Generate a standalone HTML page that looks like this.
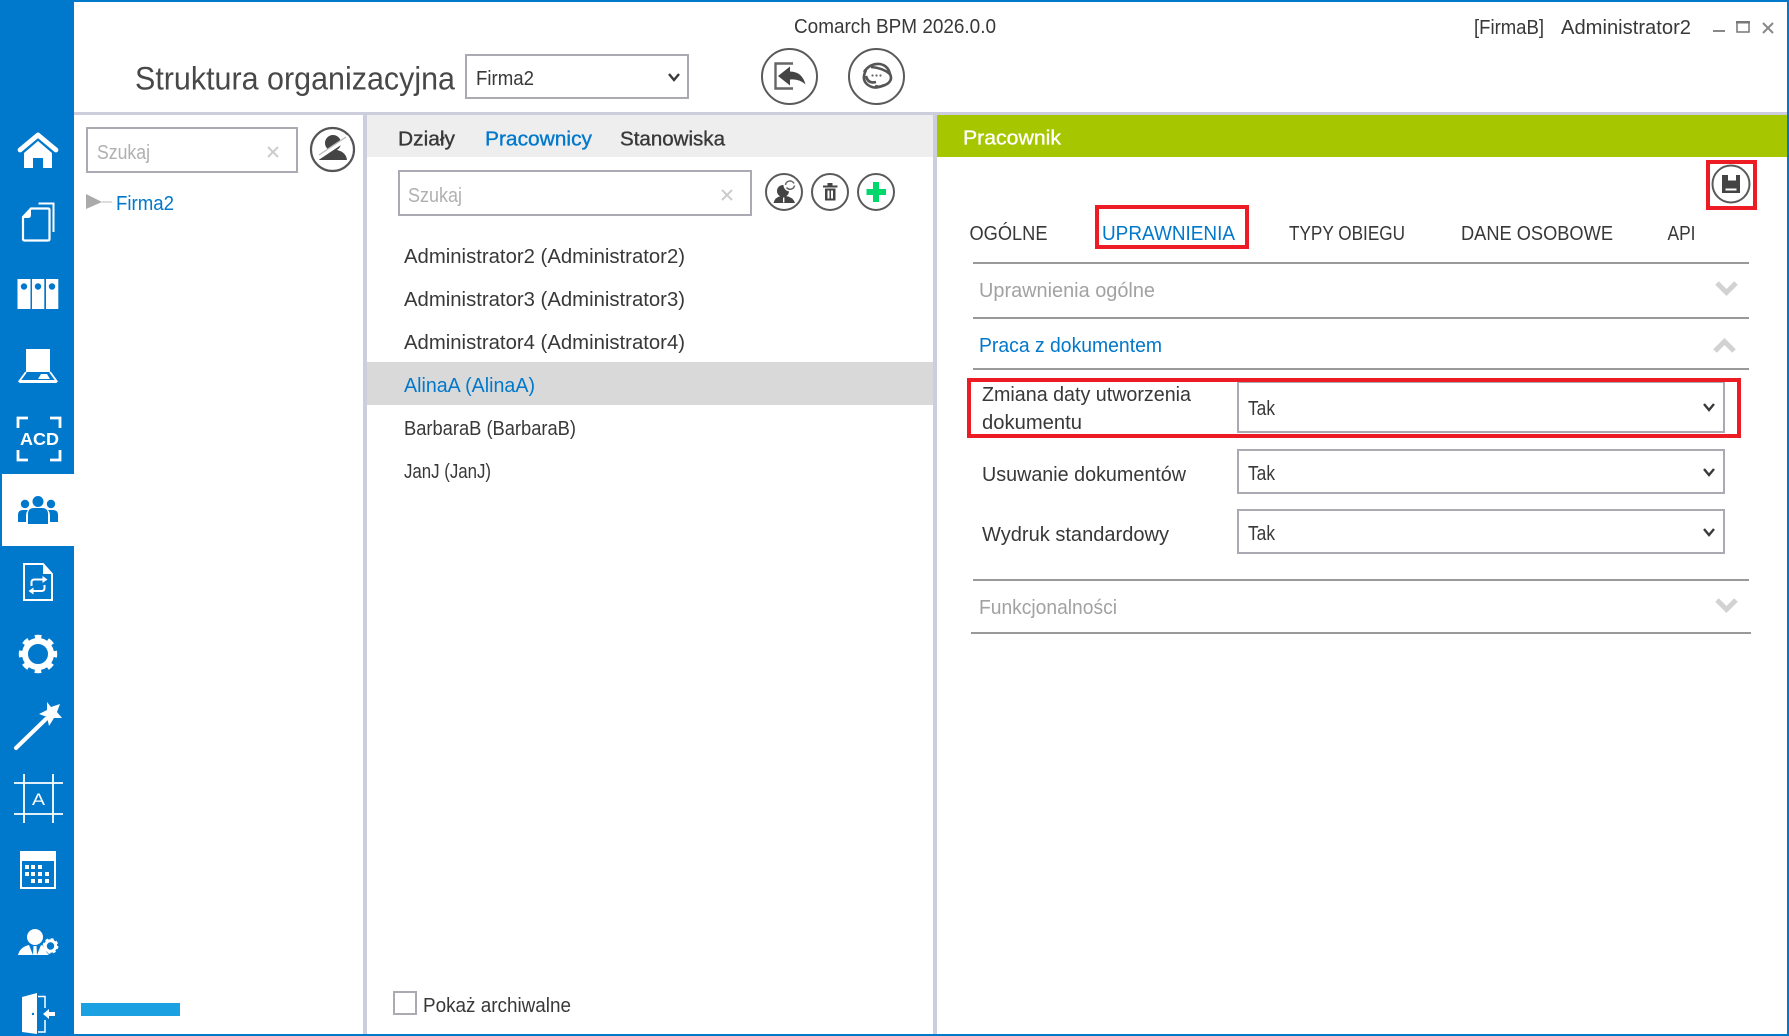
<!DOCTYPE html>
<html lang="pl">
<head>
<meta charset="utf-8">
<title>Comarch BPM</title>
<style>
html,body{margin:0;padding:0;background:#fff;width:1789px;height:1036px;overflow:hidden}
svg{display:block}
text{font-family:"Liberation Sans",Arial,sans-serif;font-size:20px;fill:#383838;white-space:pre}
.g{fill:#b0b0b0}
.a{fill:#a2a2a2}
.b{fill:#0078cc}
.s{stroke-width:.35px}
.ln{fill:#999}
.sel{fill:#fff;stroke:#aaaab2;stroke-width:2}
.chev{fill:none;stroke:#3a3a3a;stroke-width:2.4}
.acc{fill:none;stroke:#d2d2d2;stroke-width:5}
.cir{fill:#fff;stroke:#5a5a5a;stroke-width:2}
.red{fill:none;stroke:#ed1c24;stroke-width:4}
.xx{fill:none;stroke:#ccc;stroke-width:2}
</style>
</head>
<body>
<svg xmlns="http://www.w3.org/2000/svg" width="1789" height="1036" viewBox="0 0 1789 1036">
<!-- frame -->
<rect width="1789" height="1036" fill="#fff"/>
<rect x="0" y="0" width="74" height="1036" fill="#0078cc"/>
<rect x="2" y="474" width="72" height="72" fill="#fff"/>
<rect x="0" y="0" width="1789" height="2" fill="#0078cc"/>
<rect x="0" y="1034" width="1789" height="2" fill="#0078cc"/>
<rect x="1787" y="0" width="2" height="1036" fill="#0078cc"/>

<!-- panels -->
<rect x="367" y="115" width="566" height="42" fill="#eee"/>
<rect x="937" y="115" width="850" height="42" fill="#a6c600"/>
<rect x="367" y="362" width="566" height="43" fill="#d9d9d9"/>
<rect x="74" y="112" width="1713" height="3" fill="#ccceDE"/>
<rect x="363" y="112" width="4" height="922" fill="#ccceDE"/>
<rect x="933" y="112" width="4" height="922" fill="#ccceDE"/>

<!-- sidebar icons -->
<g fill="#fff">
  <!-- home -->
  <path d="M20 150 38 135 56 150" fill="none" stroke="#fff" stroke-width="4.800" stroke-linecap="round" stroke-linejoin="round"/>
  <path d="M24 153 38 141 52 153V168H43V158H33V168H24Z"/>
  <!-- documents -->
  <path d="M38.500 203.500H53.500V232" fill="none" stroke="#fff" stroke-width="2"/>
  <path d="M31 208.500H48Q49.500 208.500 49.500 210V239Q49.500 240.500 48 240.500H24.500Q23 240.500 23 239V217Z" fill="none" stroke="#fff" stroke-width="2.200"/>
  <path d="M23 218 31 208.500V215Q31 218 28 218Z"/>
  <!-- binders -->
  <rect x="17.500" y="279" width="13" height="30"/>
  <rect x="32" y="279" width="12.300" height="30"/>
  <rect x="46" y="279" width="12.300" height="30"/>
  <circle cx="24" cy="286.500" r="3.200" fill="#0078cc"/>
  <circle cx="38" cy="286.500" r="3.200" fill="#0078cc"/>
  <circle cx="52" cy="286.500" r="3.200" fill="#0078cc"/>
  <!-- laptop -->
  <rect x="26" y="349" width="24" height="23"/>
  <path d="M26 372 19.500 381H56.500L50 372" fill="none" stroke="#fff" stroke-width="1.800"/>
  <path d="M38 379 41 374H47L50 379Z"/>
  <rect x="19" y="380" width="38" height="3" rx="1"/>
  <!-- ACD -->
  <path d="M18 428V418H28M50 418H60V428M18 450V460H28M50 460H60V450" fill="none" stroke="#fff" stroke-width="2.800"/>
  <text x="20" y="445" textLength="39" lengthAdjust="spacingAndGlyphs" style="font-size:17.500px;font-weight:bold;fill:#fff">ACD</text>
</g>
<!-- people -->
<g fill="#0078cc">
  <circle cx="38" cy="501.500" r="5.500"/>
  <circle cx="25" cy="504" r="4.200"/>
  <circle cx="51" cy="504" r="4.200"/>
  <path d="M28 524V514Q28 508 34 508H42Q48 508 48 514V524Z"/>
  <path d="M18 522V515Q18 510 23 510H28Q26 512 26 516V522Z"/>
  <path d="M58 522V515Q58 510 53 510H48Q50 512 50 516V522Z"/>
</g>
<g fill="#fff">
  <!-- doc refresh -->
  <path d="M24 564H43L52 574V600H24Z" fill="none" stroke="#fff" stroke-width="2"/>
  <path d="M43 564V574H52Z"/>
  <path d="M31.500 586V582.500Q31.500 579.500 34.500 579.500H43" fill="none" stroke="#fff" stroke-width="2"/>
  <path d="M42.500 576 47.500 579.500 42.500 583Z"/>
  <path d="M44.500 585V588Q44.500 591 41.500 591H33" fill="none" stroke="#fff" stroke-width="2"/>
  <path d="M33.500 587.500 28.500 591 33.500 594.500Z"/>
  <!-- gear -->
  <circle cx="38" cy="654" r="13" fill="none" stroke="#fff" stroke-width="6"/>
  <circle cx="38" cy="654" r="17" fill="none" stroke="#fff" stroke-width="4.400" stroke-dasharray="6.400 6.950" stroke-dashoffset="3.200"/>
  <!-- wand -->
  <path d="M16 748 46 719" stroke="#fff" stroke-width="4" stroke-linecap="round"/>
  <path d="M47 702 51 707 60 704 57 712 62 718 54 718 49 726 47 717 39 714 47 710Z"/>
  <!-- crop A -->
  <path d="M14 783H63M14 814H63M24 774V823M53 774V823" stroke="#fff" stroke-width="1.800" fill="none"/>
  <text x="32" y="805" textLength="13" lengthAdjust="spacingAndGlyphs" style="font-size:17px;fill:#fff">A</text>
  <!-- calendar -->
  <rect x="21" y="852" width="34" height="36" fill="none" stroke="#fff" stroke-width="2"/>
  <rect x="20" y="851" width="36" height="10"/>
  <path d="M25 865h4v4h-4zM31 865h4v4h-4zM38 865h4v4h-4zM25 872h4v4h-4zM31 872h4v4h-4zM38 872h4v4h-4zM45 872h4v4h-4zM31 879h4v4h-4zM38 879h4v4h-4zM45 879h4v4h-4z"/>
  <!-- user gear -->
  <circle cx="35" cy="937" r="8"/>
  <path d="M18 955Q20 947 29 945L33 955ZM37 955 41 945Q44 946 46 949 46 953 49 955Z"/>
  <path d="M33.500 946H36.500L37 955H33Z"/>
  <circle cx="50.500" cy="946" r="5.200" fill="none" stroke="#fff" stroke-width="3"/>
  <circle cx="50.500" cy="946" r="7" fill="none" stroke="#fff" stroke-width="1.800" stroke-dasharray="3 2.500"/>
  <!-- door -->
  <path d="M22 997 37 993V1034L22 1032Z"/>
  <circle cx="33" cy="1014" r="1.200" fill="#0078cc"/>
  <path d="M38 996.500H45V1008M45 1020V1032H38" fill="none" stroke="#fff" stroke-width="1.500"/>
  <path d="M43 1014 49 1009V1012H55V1016H49V1019Z"/>
</g>

<!-- progress -->
<rect x="81" y="1003" width="99" height="13" fill="#1ba1e2"/>

<!-- title bar -->
<text x="794" y="33" textLength="202" lengthAdjust="spacingAndGlyphs">Comarch BPM 2026.0.0</text>
<text x="1474" y="34" textLength="70" lengthAdjust="spacingAndGlyphs">[FirmaB]</text>
<text x="1561" y="34" textLength="130" lengthAdjust="spacingAndGlyphs">Administrator2</text>
<rect x="1713" y="30" width="12" height="2" fill="#888"/>
<rect x="1737" y="22" width="12" height="10" fill="none" stroke="#777" stroke-width="1.500"/>
<rect x="1736" y="21" width="14" height="2.500" fill="#777"/>
<path d="M1763 23 1773 33M1773 23 1763 33" stroke="#888" stroke-width="2" fill="none"/>

<!-- heading -->
<text x="135" y="89.500" textLength="320" lengthAdjust="spacingAndGlyphs" style="font-size:32px;fill:#484848">Struktura organizacyjna</text>
<rect class="sel" x="466" y="55" width="222" height="43"/>
<text x="476" y="85" textLength="58" lengthAdjust="spacingAndGlyphs">Firma2</text>
<path class="chev" d="M669 74 674 80 679 74"/>

<!-- header buttons -->
<circle class="cir" cx="789.500" cy="76.500" r="27.500"/>
<path d="M793 63.500H775.500V88.500H793" fill="none" stroke="#666" stroke-width="2.400"/>
<path d="M778 76 790 66.500V71.500Q802 71.500 805.500 84.500 799 78.500 790 79.500V85.500Z" fill="#444"/>
<circle class="cir" cx="876.500" cy="76.500" r="27.500"/>
<g fill="none" stroke="#555" stroke-width="2.600">
  <path d="M864 72Q870 63 880 64 889 66 890 75"/>
  <path d="M866 70Q861 80 868 85 875 90 884 85"/>
  <path d="M871 67Q883 68 890 74 893 80 887 84 880 88 875 86"/>
  <path d="M866 76Q868 84 876 82"/>
</g>
<circle cx="872.500" cy="75.500" r="1.100" fill="#666"/><circle cx="876.500" cy="75.500" r="1.100" fill="#666"/><circle cx="880.500" cy="75.500" r="1.100" fill="#666"/>

<!-- left search -->
<rect class="sel" x="87" y="128" width="210" height="44"/>
<text class="g" x="97" y="159" textLength="53" lengthAdjust="spacingAndGlyphs">Szukaj</text>
<path class="xx" d="M268 147 278 157M278 147 268 157"/>
<circle cx="332.500" cy="149.500" r="21.500" fill="#fff" stroke="#555" stroke-width="2.200"/>
<circle cx="333" cy="143" r="8" fill="#444"/>
<path d="M319 160Q320 152 330 150H337Q346 152 347 160Z" fill="#444"/>
<path d="M316 159 349 137" stroke="#fff" stroke-width="4.500"/>
<path d="M319 155 346 137" stroke="#bbb" stroke-width="1.200"/>

<!-- tree -->
<path d="M86 194 102 202 86 209Z" fill="#aaa"/>
<rect x="102" y="201.500" width="10" height="1" fill="#bbb"/>
<text class="b" x="116" y="210" textLength="58" lengthAdjust="spacingAndGlyphs">Firma2</text>

<!-- middle tabs -->
<text class="s" x="398" y="145.500" textLength="57" lengthAdjust="spacingAndGlyphs" stroke="#383838">Działy</text>
<text class="b s" x="485" y="145.500" textLength="107" lengthAdjust="spacingAndGlyphs" stroke="#0078cc">Pracownicy</text>
<text class="s" x="620" y="145.500" textLength="105" lengthAdjust="spacingAndGlyphs" stroke="#383838">Stanowiska</text>

<!-- middle search -->
<rect class="sel" x="399" y="171" width="352" height="44"/>
<text class="g" x="408" y="202" textLength="54" lengthAdjust="spacingAndGlyphs">Szukaj</text>
<path class="xx" d="M722 190 732 200M732 190 722 200"/>

<circle class="cir" cx="784" cy="192" r="18"/>
<circle cx="783" cy="191" r="6" fill="#444"/>
<path d="M773.500 203Q775 197 781 196H786Q793 197 795 203Z" fill="#444"/>
<rect x="783" y="197.500" width="1.400" height="5" fill="#fff"/>
<circle cx="790" cy="185" r="6.500" fill="#fff"/>
<path d="M785.500 185A4.500 4.500 0 0 1 794 183.500M794.500 185.500A4.500 4.500 0 0 1 786.500 187.500" fill="none" stroke="#666" stroke-width="1.500"/>

<circle class="cir" cx="830" cy="192" r="18"/>
<path d="M823 185.500H827.500V183H832.500V185.500H837.500V187.500H823ZM825 188.500H835.500V200.500H825Z" fill="#444"/>
<rect x="827.500" y="190.500" width="2" height="8" fill="#fff"/><rect x="831" y="190.500" width="2" height="8" fill="#fff"/>

<circle class="cir" cx="876" cy="192" r="18"/>
<path d="M866.500 189H873V182H879V189H886V195H879V202H873V195H866.500Z" fill="#00d86c"/>

<!-- list -->
<text x="404" y="263" textLength="281" lengthAdjust="spacingAndGlyphs">Administrator2 (Administrator2)</text>
<text x="404" y="306" textLength="281" lengthAdjust="spacingAndGlyphs">Administrator3 (Administrator3)</text>
<text x="404" y="349" textLength="281" lengthAdjust="spacingAndGlyphs">Administrator4 (Administrator4)</text>
<text class="b" x="404" y="392" textLength="131" lengthAdjust="spacingAndGlyphs">AlinaA (AlinaA)</text>
<text x="404" y="435" textLength="172" lengthAdjust="spacingAndGlyphs">BarbaraB (BarbaraB)</text>
<text x="404" y="478" textLength="87" lengthAdjust="spacingAndGlyphs">JanJ (JanJ)</text>

<!-- archive -->
<rect x="394" y="992" width="22" height="22" fill="#fff" stroke="#aaaab2" stroke-width="2"/>
<text x="423" y="1012" textLength="148" lengthAdjust="spacingAndGlyphs">Pokaż archiwalne</text>

<!-- right panel -->
<text class="s" x="963" y="144.500" textLength="98" lengthAdjust="spacingAndGlyphs" style="fill:#fff" stroke="#fff">Pracownik</text>
<rect class="red" x="1708" y="162" width="47" height="46"/>
<circle class="cir" cx="1731" cy="184" r="18.500"/>
<path d="M1722 175H1728V180.500H1736V175H1740V193H1722ZM1725.500 188.500V190.500H1736.500V188.500Z" fill="#444" fill-rule="evenodd"/>

<text x="969.500" y="240" textLength="78" lengthAdjust="spacingAndGlyphs">OGÓLNE</text>
<text class="b" x="1102" y="240" textLength="133" lengthAdjust="spacingAndGlyphs">UPRAWNIENIA</text>
<text x="1289" y="240" textLength="116" lengthAdjust="spacingAndGlyphs">TYPY OBIEGU</text>
<text x="1461" y="240" textLength="152" lengthAdjust="spacingAndGlyphs">DANE OSOBOWE</text>
<text x="1667.500" y="240" textLength="28" lengthAdjust="spacingAndGlyphs">API</text>
<rect class="red" x="1097" y="207" width="150" height="40"/>

<rect class="ln" x="973" y="262" width="776" height="2"/>
<text class="a" x="979" y="297" textLength="176" lengthAdjust="spacingAndGlyphs">Uprawnienia ogólne</text>
<path class="acc" d="M1717 283 1726.500 292.500 1736 283"/>
<rect class="ln" x="973" y="317" width="776" height="2"/>
<text class="b" x="979" y="352" textLength="183" lengthAdjust="spacingAndGlyphs">Praca z dokumentem</text>
<path class="acc" d="M1715 351 1724.500 341.500 1734 351"/>
<rect class="ln" x="973" y="368" width="776" height="2"/>

<!-- rows -->
<rect class="sel" x="1238" y="382" width="486" height="50"/>
<text x="982" y="401" textLength="209" lengthAdjust="spacingAndGlyphs">Zmiana daty utworzenia</text>
<text x="982" y="429" textLength="100" lengthAdjust="spacingAndGlyphs">dokumentu</text>
<text x="1248" y="415" textLength="27" lengthAdjust="spacingAndGlyphs">Tak</text>
<path class="chev" d="M1704 404 1709 410 1714 404"/>
<rect class="red" x="969" y="380" width="770" height="56"/>

<rect class="sel" x="1238" y="450" width="486" height="43"/>
<text x="982" y="481" textLength="204" lengthAdjust="spacingAndGlyphs">Usuwanie dokumentów</text>
<text x="1248" y="480" textLength="27" lengthAdjust="spacingAndGlyphs">Tak</text>
<path class="chev" d="M1704 469 1709 475 1714 469"/>

<rect class="sel" x="1238" y="510" width="486" height="43"/>
<text x="982" y="541" textLength="187" lengthAdjust="spacingAndGlyphs">Wydruk standardowy</text>
<text x="1248" y="540" textLength="27" lengthAdjust="spacingAndGlyphs">Tak</text>
<path class="chev" d="M1704 529 1709 535 1714 529"/>

<rect class="ln" x="973" y="579" width="776" height="2"/>
<text class="a" x="979" y="614" textLength="138" lengthAdjust="spacingAndGlyphs">Funkcjonalności</text>
<path class="acc" d="M1717 600 1726.500 609.500 1736 600"/>
<rect class="ln" x="971" y="632" width="780" height="2"/>
</svg>
</body>
</html>
